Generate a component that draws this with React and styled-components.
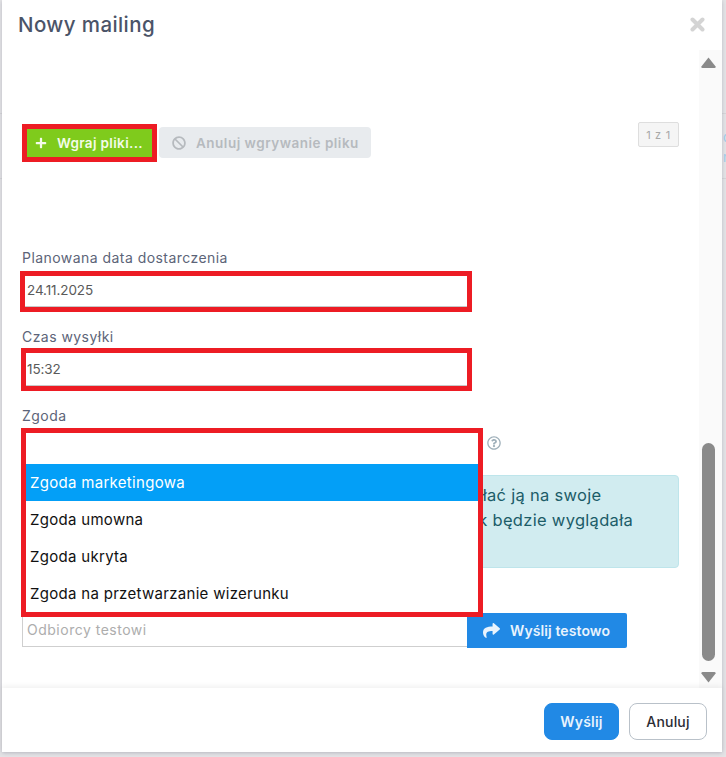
import React from 'react';
import styled, { createGlobalStyle } from 'styled-components';
import { FaPlus, FaBan, FaShare, FaRegQuestionCircle } from 'react-icons/fa';

const GlobalStyle = createGlobalStyle`
	html, body {
		margin: 0;
		padding: 0;
		height: 757px;
		overflow: hidden;
		background: #e4e4e6;
		font-family: Inter, "Open Sans", "Liberation Sans", sans-serif;
	}
	* {
		box-sizing: border-box;
	}
`;

const Page = styled.div`
	position: relative;
	width: 726px;
	height: 757px;
	overflow: hidden;
`;

const BehindLine = styled.div`
	position: absolute;
	left: 0;
	right: 0;
	top: ${props => props.top}px;
	height: 1px;
	background: #d6d6d8;
`;

const BehindLink = styled.span`
	position: absolute;
	left: 723px;
	top: ${props => props.top}px;
	font-size: 13px;
	line-height: 14px;
	color: #9fcdea;
`;

const Modal = styled.div`
	position: relative;
	margin-left: 2px;
	width: 720px;
	height: 752px;
	background: white;
	display: flex;
	flex-direction: column;
	box-shadow: 0 1px 4px rgba(60, 60, 90, 0.25);
`;

const Header = styled.div`
	height: 50px;
	padding: 0 17px 2px 16px;
	display: flex;
	align-items: center;
	justify-content: space-between;
`;

const Title = styled.h2`
	margin: 0;
	font-size: 20.5px;
	font-weight: 500;
	letter-spacing: 0.4px;
	color: #4b5468;
`;

const Close = styled.svg`
	width: 15px;
	height: 15px;
	stroke: #d4d4d4;
	stroke-width: 4;
	stroke-linecap: round;
`;

const Body = styled.div`
	flex: 1;
	display: flex;
	min-height: 0;
`;

const Content = styled.div`
	flex: 1;
	padding: 72px 20px 0 20px;
	min-width: 0;
`;

const UploadRow = styled.div`
	display: flex;
	align-items: flex-start;
`;

const GreenButton = styled.div`
	margin: 7px 0 0 5px;
	width: 125px;
	height: 28px;
	background: #7fcb1c;
	color: #f4fbe9;
	outline: 5px solid #ed1c24;
	display: flex;
	align-items: center;
	padding-left: 8px;
	gap: 10px;
	font-size: 13.5px;
	font-weight: 600;
	letter-spacing: 0.35px;
	svg {
		font-size: 12px;
	}
`;

const DisabledButton = styled.div`
	margin: 5px 0 0 7px;
	width: 212px;
	height: 31px;
	border-radius: 4px;
	background: #e8ebee;
	color: #b6babe;
	display: flex;
	align-items: center;
	padding-left: 13px;
	gap: 10px;
	font-size: 13.5px;
	font-weight: 600;
	letter-spacing: 0.5px;
	svg {
		font-size: 14px;
	}
`;

const Counter = styled.div`
	margin-left: auto;
	width: 41px;
	height: 25px;
	border: 1px solid #dedede;
	border-radius: 2px;
	background: #f5f5f5;
	color: #a8a8a8;
	font-size: 11px;
	letter-spacing: 0.7px;
	display: flex;
	align-items: center;
	justify-content: center;
`;

const Label = styled.div`
	margin-top: ${props => props.top}px;
	font-size: 14px;
	line-height: 20px;
	letter-spacing: 0.45px;
	color: #5c6478;
`;

const TextField = styled.div`
	margin: ${props => props.gap}px 0 0 ${props => props.left}px;
	width: ${props => props.wide}px;
	height: ${props => props.high}px;
	outline: 5px solid #ed1c24;
	border-bottom: 1px solid #c8c8c8;
	padding: 0 0 ${props => props.lift}px ${props => props.pad}px;
	display: flex;
	align-items: center;
	font-size: 13.5px;
	letter-spacing: -0.1px;
	color: #5a5a5a;
`;

const SelectRow = styled.div`
	margin: 7px 0 0 4px;
	height: 31px;
	display: flex;
	align-items: flex-start;
	gap: 9px;
`;

const SelectHolder = styled.div`
	position: relative;
	width: 452px;
	height: 31px;
`;

const SelectList = styled.div`
	position: absolute;
	z-index: 2;
	top: 0;
	left: 0;
	width: 100%;
	background: white;
	outline: 5px solid #ed1c24;
	padding-top: 31px;
`;

const Option = styled.div`
	height: 37px;
	padding-left: 4px;
	display: flex;
	align-items: center;
	font-size: 15px;
	font-weight: 400;
	letter-spacing: 0.3px;
	color: ${props => props.active ? 'white' : '#111'};
	background: ${props => props.active ? '#039ff7' : 'white'};
`;

const Help = styled.div`
	margin-top: 3px;
	color: #9fb0ba;
	font-size: 14px;
	line-height: 0;
`;

const Alert = styled.div`
	margin-top: 11px;
	height: 93px;
	padding: 7px 0 0 108px;
	background: #d1ecf0;
	border: 1px solid #bee5eb;
	border-radius: 4px;
	color: #1c5c68;
	font-size: 16.5px;
	line-height: 25px;
	letter-spacing: 0.3px;
	white-space: nowrap;
`;

const TestRow = styled.div`
	margin-top: 45px;
	display: flex;
	align-items: flex-start;
`;

const TestInput = styled.div`
	width: 445px;
	height: 34px;
	border: 1px solid #cfcfcf;
	border-top: none;
	border-right: none;
	padding-left: 4px;
	display: flex;
	align-items: center;
	font-size: 14px;
	letter-spacing: 0.5px;
	color: #adadad;
`;

const SendTestButton = styled.div`
	width: 160px;
	height: 35px;
	border-radius: 0 2px 2px 0;
	background: #2189e5;
	color: #e8f3fd;
	display: flex;
	align-items: center;
	padding-left: 16px;
	gap: 10px;
	font-size: 14px;
	font-weight: 600;
	letter-spacing: 0.1px;
	svg {
		font-size: 17px;
	}
`;

const Scrollbar = styled.div`
	width: 23px;
	background: #fafafa;
	padding: 7px 6px 5px 2px;
	display: flex;
	flex-direction: column;
	align-items: center;
`;

const ScrollArrow = styled.svg`
	width: 15px;
	height: 11px;
	fill: #8a8a8a;
	flex: none;
`;

const ScrollThumb = styled.div`
	margin: 375px 0 11px;
	width: 13px;
	height: 219px;
	border-radius: 7px;
	background: #8a8a8a;
`;

const Footer = styled.div`
	position: relative;
	height: 64px;
	padding: 15px 15px 0 0;
	display: flex;
	justify-content: flex-end;
	gap: 10px;
	background: white;
	box-shadow: 0 -2px 5px rgba(0, 0, 0, 0.06);
`;

const FooterButton = styled.div`
	width: ${props => props.wide}px;
	height: 37px;
	border-radius: 8px;
	display: flex;
	align-items: center;
	justify-content: center;
	font-size: 14px;
	font-weight: ${props => props.primary ? 600 : 500};
	letter-spacing: 0.2px;
	color: ${props => props.primary ? '#e8f3fd' : '#2c2c34'};
	background: ${props => props.primary ? '#2189e5' : 'white'};
	border: 1px solid ${props => props.primary ? '#2189e5' : '#b9c1c9'};
`;

const App = () => (
	<Page>
		<GlobalStyle />
		<BehindLine top={113} />
		<BehindLine top={178} />
		<BehindLink top={130}>d</BehindLink>
		<BehindLink top={150}>n</BehindLink>
		<Modal>
			<Header>
				<Title>Nowy mailing</Title>
				<Close viewBox="0 0 15 15"><path d="M2.5 2.5 L12.5 12.5 M12.5 2.5 L2.5 12.5" /></Close>
			</Header>
			<Body>
				<Content>
					<UploadRow>
						<GreenButton><FaPlus />Wgraj pliki...</GreenButton>
						<DisabledButton><FaBan />Anuluj wgrywanie pliku</DisabledButton>
						<Counter>1 z 1</Counter>
					</UploadRow>
					<Label top={90}>Planowana data dostarczenia</Label>
					<TextField gap={8} left={3} wide={442} high={31} pad={2} lift={3}>24.11.2025</TextField>
					<Label top={20}>Czas wysyłki</Label>
					<TextField gap={6} left={4} wide={441} high={33} pad={1} lift={0}>15:32</TextField>
					<Label top={20}>Zgoda</Label>
					<SelectRow>
						<SelectHolder>
							<SelectList>
								<Option active>Zgoda marketingowa</Option>
								<Option>Zgoda umowna</Option>
								<Option>Zgoda ukryta</Option>
								<Option>Zgoda na przetwarzanie wizerunku</Option>
							</SelectList>
						</SelectHolder>
						<Help><FaRegQuestionCircle /></Help>
					</SelectRow>
					<Alert>
						Aby przetestować wiadomość, możesz wysłać ją na swoje<br />
						adresy e-mail i dziś dokładnie zobaczyć, jak będzie wyglądała<br />
						po wysłaniu.
					</Alert>
					<TestRow>
						<TestInput>Odbiorcy testowi</TestInput>
						<SendTestButton><FaShare />Wyślij testowo</SendTestButton>
					</TestRow>
				</Content>
				<Scrollbar>
					<ScrollArrow viewBox="0 0 15 11"><path d="M7.5 0.5 L14.6 9.5 Q15 11 13.5 11 L1.5 11 Q0 11 0.4 9.5 Z" /></ScrollArrow>
					<ScrollThumb />
					<ScrollArrow viewBox="0 0 15 11"><path d="M7.5 10.5 L14.6 1.5 Q15 0 13.5 0 L1.5 0 Q0 0 0.4 1.5 Z" /></ScrollArrow>
				</Scrollbar>
			</Body>
			<Footer>
				<FooterButton primary wide={75}>Wyślij</FooterButton>
				<FooterButton wide={78}>Anuluj</FooterButton>
			</Footer>
		</Modal>
	</Page>
);

export default App;
